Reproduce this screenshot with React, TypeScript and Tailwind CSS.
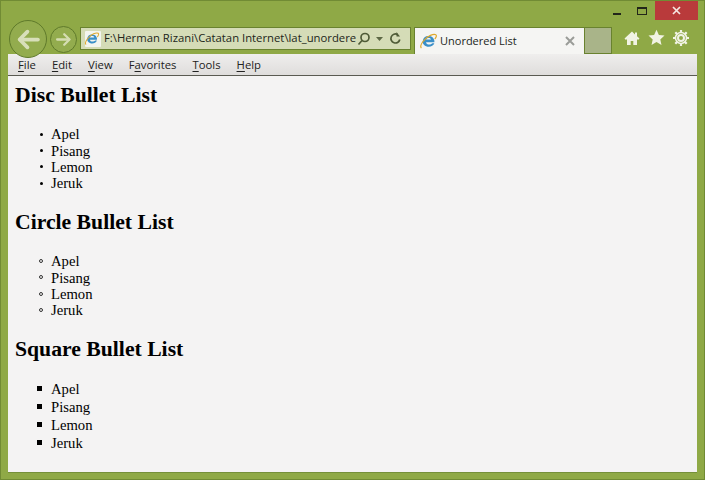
const uiFont = "font-['Open_Sans','Noto_Sans',sans-serif]"

const menus = [
  { key: 'F', rest: 'ile' },
  { key: 'E', rest: 'dit' },
  { key: 'V', rest: 'iew' },
  { pre: 'F', key: 'a', rest: 'vorites' },
  { key: 'T', rest: 'ools' },
  { key: 'H', rest: 'elp' },
]

const fruits = ['Apel', 'Pisang', 'Lemon', 'Jeruk']

function IeLogo({ size }: { size: number }) {
  return (
    <svg width={size} height={size} viewBox="0 0 20 20" fill="none">
      <path d="M4 9.500a6.200 6.200 0 0 1 12.200-.3v1.600H7.400c.2 2.600 4.600 3.400 6.600 1h2.200c-1.500 4.200-8 5-11 1.500C3.900 12 3.700 10.700 4 9.500z" fill="#3a8fc8" />
      <path d="M7.400 8h5.400c-.2-2.400-5-2.400-5.400 0z" fill="#f3f6f4" />
      <path d="M2.200 16.500C.5 14 6 6 12 3.500c3-1.300 6-1.500 6.300.2.200 1-.6 2.300-1.300 3.300" stroke="#dfa92e" strokeWidth="1.300" strokeLinecap="round" />
    </svg>
  )
}

function BackArrow({ size, color }: { size: number; color: string }) {
  return (
    <svg width={size} height={size} viewBox="0 0 24 24" fill="none" stroke={color} strokeWidth="3.600" strokeLinecap="round" strokeLinejoin="round">
      <path d="M21 12H4" />
      <path d="M11 4.500 3.500 12l7.500 7.500" />
    </svg>
  )
}

function ForwardArrow() {
  return (
    <svg width="17" height="17" viewBox="0 0 24 24" fill="none" stroke="#d5ddb2" strokeWidth="3.200" strokeLinecap="round" strokeLinejoin="round">
      <path d="M3 12h17" />
      <path d="M13 4.500 20.500 12 13 19.500" />
    </svg>
  )
}

function Section({ title, bullet, listClass, rowClass }: { title: string; bullet: 'disc' | 'circle' | 'square'; listClass: string; rowClass: string }) {
  return (
    <section>
      <h2 className="text-[21.7px] font-bold leading-[25px] text-black">{title}</h2>
      <ul className={`pl-[20px] ${listClass}`}>
        {fruits.map(f => (
          <li key={f} className={`flex items-center text-[14.67px] text-black ${rowClass}`}>
            <span className="flex w-[16px] justify-center">
              {bullet === 'disc' && <span className="ml-[-4px] h-[3px] w-[3px] rounded-full bg-black" />}
              {bullet === 'circle' && <span className="ml-[-4px] h-[4px] w-[4px] rounded-full border border-[#333]" />}
              {bullet === 'square' && <span className="ml-[-8px] h-[5px] w-[5px] bg-black" />}
            </span>
            {f}
          </li>
        ))}
      </ul>
    </section>
  )
}

export default function App() {
  return (
    <div className="flex h-[480px] w-[705px] flex-col overflow-hidden border border-[#718b34] bg-[#8fa946]">
      {/* Caption buttons */}
      <div className="flex h-[19px] shrink-0 justify-end pr-[6px]">
        <div className="flex w-[24px] justify-center pt-[12px]">
          <span className="h-[2px] w-[8px] bg-[#22261a]" />
        </div>
        <div className="flex w-[26px] justify-center pt-[6px]">
          <span className="h-[8px] w-[10px] border border-t-2 border-[#22261a]" />
        </div>
        <div className="flex w-[43px] items-center justify-center bg-[#b93a3b] text-white">
          <svg width="9" height="9" viewBox="0 0 9 9" stroke="#f6e6e2" strokeWidth="1.700">
            <path d="M1 1l7 7M8 1 1 8" />
          </svg>
        </div>
      </div>

      {/* Toolbar row */}
      <div className="flex h-[34px] shrink-0 items-start pl-[8px]">
        <div className="z-10 flex h-[38px] w-[38px] shrink-0 items-center justify-center rounded-full border border-[#5f7a2b] bg-[#93ac4e]">
          <BackArrow size={25} color="#d8dfba" />
        </div>
        <div className="z-10 ml-[3px] mt-[6px] flex h-[27px] w-[27px] shrink-0 items-center justify-center rounded-full border border-[#5f7a2b] bg-[#93ac4e]">
          <ForwardArrow />
        </div>
        <div className={`ml-[3px] mt-[7px] flex h-[23px] w-[331px] shrink-0 items-center border border-[#69822f] bg-[#d5dcb7] pl-[4px] text-[11.3px] text-[#22261a] ${uiFont}`}>
          <span className="relative h-[16px] w-[16px] shrink-0 rounded-[1px] bg-[#f3f5ef]">
            <span className="absolute -left-[1px] top-0">
              <IeLogo size={16} />
            </span>
          </span>
          <span className="ml-[3px] w-[252px] overflow-hidden whitespace-nowrap">F:\Herman Rizani\Catatan Internet\lat_unordere</span>
          <svg width="14" height="14" viewBox="0 0 14 14" fill="none" stroke="#4f5b37" strokeWidth="1.700" className="ml-[1px]">
            <circle cx="8" cy="5.500" r="4" />
            <path d="M5 8.500 1.500 12.500" />
          </svg>
          <svg width="7" height="4" viewBox="0 0 7 4" fill="#5d6845" className="ml-[5px]">
            <path d="M0 0h7L3.500 4z" />
          </svg>
          <svg width="13" height="13" viewBox="0 0 13 13" fill="none" stroke="#4f5b37" strokeWidth="1.700" className="ml-[6px]">
            <path d="M10.800 7.500A4.500 4.500 0 1 1 8.500 2.500" />
            <path d="M7.500 0v4.500h3.500z" fill="#4f5b37" stroke="none" />
          </svg>
        </div>
        <div className={`ml-[3px] mt-[7px] flex h-[27px] w-[171px] shrink-0 items-center border-t border-x border-[#69822f] bg-[#f5f5f3] pl-[4px] pr-[4px] text-[11px] text-[#22261a] ${uiFont}`}>
          <IeLogo size={19} />
          <span className="ml-[2px]">Unordered List</span>
          <svg width="10" height="10" viewBox="0 0 10 10" stroke="#9a9c98" strokeWidth="2" className="ml-auto mr-[5px]">
            <path d="M1 1l8 8M9 1 1 9" />
          </svg>
        </div>
        <div className="mt-[7px] h-[27px] w-[27px] shrink-0 border-y border-r border-[#69822f] bg-[#a9b489]" />
        <div className="ml-[12px] mt-[9px] flex items-center gap-[8px]">
          <svg width="16" height="16" viewBox="0 0 16 16" fill="#f1f3e4">
            <path d="M8 1.500 0.500 8.500 2 10l1-.9V15h3.700v-4h2.600v4H13V9.100l1 .9 1.500-1.500-2.500-2.300V2.500h-2v2z" />
          </svg>
          <svg width="17" height="17" viewBox="0 0 17 17" fill="#f1f3e4">
            <path d="M8.500.8l2.400 5.200 5.600.6-4.200 3.800 1.200 5.600-5-2.900-5 2.900 1.200-5.600L.5 6.600l5.600-.6z" />
          </svg>
          <svg width="16" height="16" viewBox="0 0 16 16" fill="none" stroke="#f1f3e4">
            <circle cx="8" cy="8" r="3" strokeWidth="2" />
            <circle cx="8" cy="8" r="5.500" strokeWidth="1.500" />
            <path d="M8 0v3M8 13v3M0 8h3M13 8h3M2.300 2.300l2.100 2.100M11.600 11.600l2.100 2.100M13.700 2.300l-2.100 2.100M4.400 11.600l-2.100 2.100" strokeWidth="2.200" />
          </svg>
        </div>
      </div>

      {/* Page area */}
      <div className="mx-[7px] mb-[6px] flex min-h-0 flex-1 flex-col border-b border-[#75903a] bg-[#f4f3f3]">
        <div className={`flex h-[22px] shrink-0 items-center gap-[16px] border-b border-[#5a5a52] bg-gradient-to-b from-[#efeeed] to-[#dfdddc] pl-[10px] pt-[1px] text-[11.3px] text-[#222] ${uiFont}`}>
          {menus.map(m => (
            <span key={m.key + m.rest}>
              {m.pre}
              <span className="underline underline-offset-2">{m.key}</span>
              {m.rest}
            </span>
          ))}
        </div>
        <div className="flex flex-col gap-[18.7px] pl-[7px] pt-[7px] font-['Liberation_Serif',serif]">
          <Section title="Disc Bullet List" bullet="disc" listClass="mt-[18px]" rowClass="h-[16.33px]" />
          <Section title="Circle Bullet List" bullet="circle" listClass="mt-[18px]" rowClass="h-[16.33px]" />
          <Section title="Square Bullet List" bullet="square" listClass="mt-[17.6px]" rowClass="h-[18px]" />
        </div>
      </div>
    </div>
  )
}
